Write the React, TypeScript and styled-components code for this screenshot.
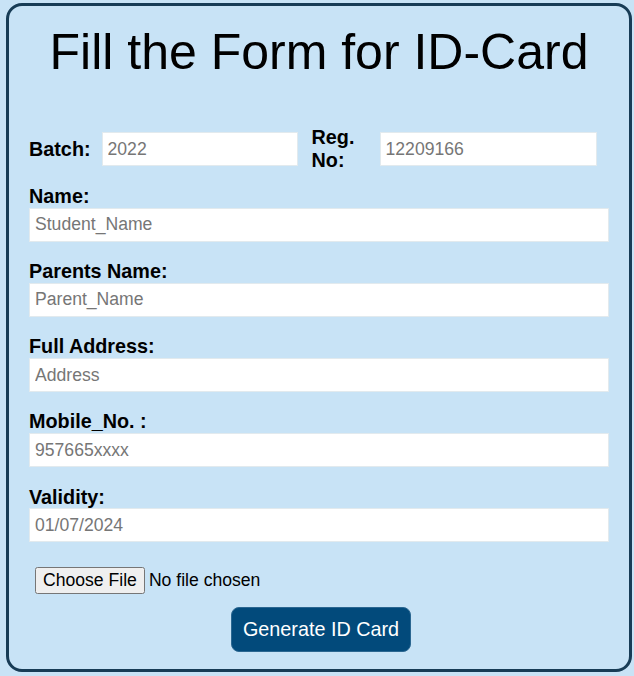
import styled, { createGlobalStyle } from "styled-components";

const GlobalStyle = createGlobalStyle`
  html, body {
    margin: 0;
    padding: 0;
    background: #c8e3f6;
    font-family: "Liberation Sans", Arial, sans-serif;
  }
  * {
    box-sizing: border-box;
  }
`;

const fields = [
  { label: "Name:", placeholder: "Student_Name" },
  { label: "Parents Name:", placeholder: "Parent_Name" },
  { label: "Full Address:", placeholder: "Address" },
  { label: "Mobile_No. :", placeholder: "957665xxxx" },
  { label: "Validity:", placeholder: "01/07/2024" },
];

export default function App() {
  return (
    <>
      <GlobalStyle />
      <Card>
        <Title>Fill the Form for ID-Card</Title>
        <InlineRow>
          <Label $inline>Batch:</Label>
          <TextInput $width={196} placeholder="2022" />
          <Label $inline $narrow>
            Reg. No:
          </Label>
          <TextInput $width={217} placeholder="12209166" />
        </InlineRow>
        <Fields>
          {fields.map((f) => (
            <Field key={f.label}>
              <Label>{f.label}</Label>
              <TextInput placeholder={f.placeholder} />
            </Field>
          ))}
        </Fields>
        <FileInput type="file" />
        <ButtonRow>
          <GenerateButton>Generate ID Card</GenerateButton>
        </ButtonRow>
      </Card>
    </>
  );
}

const Card = styled.div`
  width: 626px;
  height: 669px;
  margin: 3px 0 0 6px;
  padding: 18px 20px 0;
  border: 3px solid #173c56;
  border-radius: 16px;
  background: #c8e3f6;
  display: flex;
  flex-direction: column;
`;

const Title = styled.h1`
  margin: 0;
  font-size: 50px;
  font-weight: 400;
  line-height: 57px;
  color: #000;
  text-align: center;
`;

const InlineRow = styled.div`
  display: flex;
  align-items: center;
  margin-top: 45px;
  min-height: 46px;
`;

const Label = styled.label<{ $inline?: boolean; $narrow?: boolean }>`
  display: block;
  font-size: 19.8px;
  font-weight: 700;
  color: #000;
  line-height: 22.75px;
  ${({ $inline }) => $inline && `margin-right: 11px;`}
  ${({ $narrow }) => $narrow && `width: 56px; margin: 0 12px 0 14px;`}
`;

const TextInput = styled.input<{ $width?: number }>`
  display: block;
  width: ${({ $width }) => ($width ? `${$width}px` : "100%")};
  height: 34px;
  padding: 6px 5px;
  border: 1px solid #e2eaee;
  background: #fff;
  font-family: "Liberation Sans", Arial, sans-serif;
  font-size: 17.6px;
  color: #000;
  outline: none;

  &::placeholder {
    color: #767676;
  }
`;

const Fields = styled.div`
  display: flex;
  flex-direction: column;
  gap: 18.4px;
  margin-top: 13px;
`;

const Field = styled.div`
  display: flex;
  flex-direction: column;
`;

const FileInput = styled.input`
  margin: 25px 0 0 6px;
  font-family: "Liberation Sans", Arial, sans-serif;
  font-size: 17.6px;
  color: #000;
`;

const ButtonRow = styled.div`
  display: flex;
  justify-content: center;
  margin-top: 13px;
  padding-left: 4px;
`;

const GenerateButton = styled.button`
  padding: 10px 11px;
  border: 1px solid #2b6791;
  border-radius: 8px;
  background: #024a7b;
  color: #fff;
  font-family: "Liberation Sans", Arial, sans-serif;
  font-size: 19.8px;
  line-height: 22.75px;
  cursor: pointer;
`;
